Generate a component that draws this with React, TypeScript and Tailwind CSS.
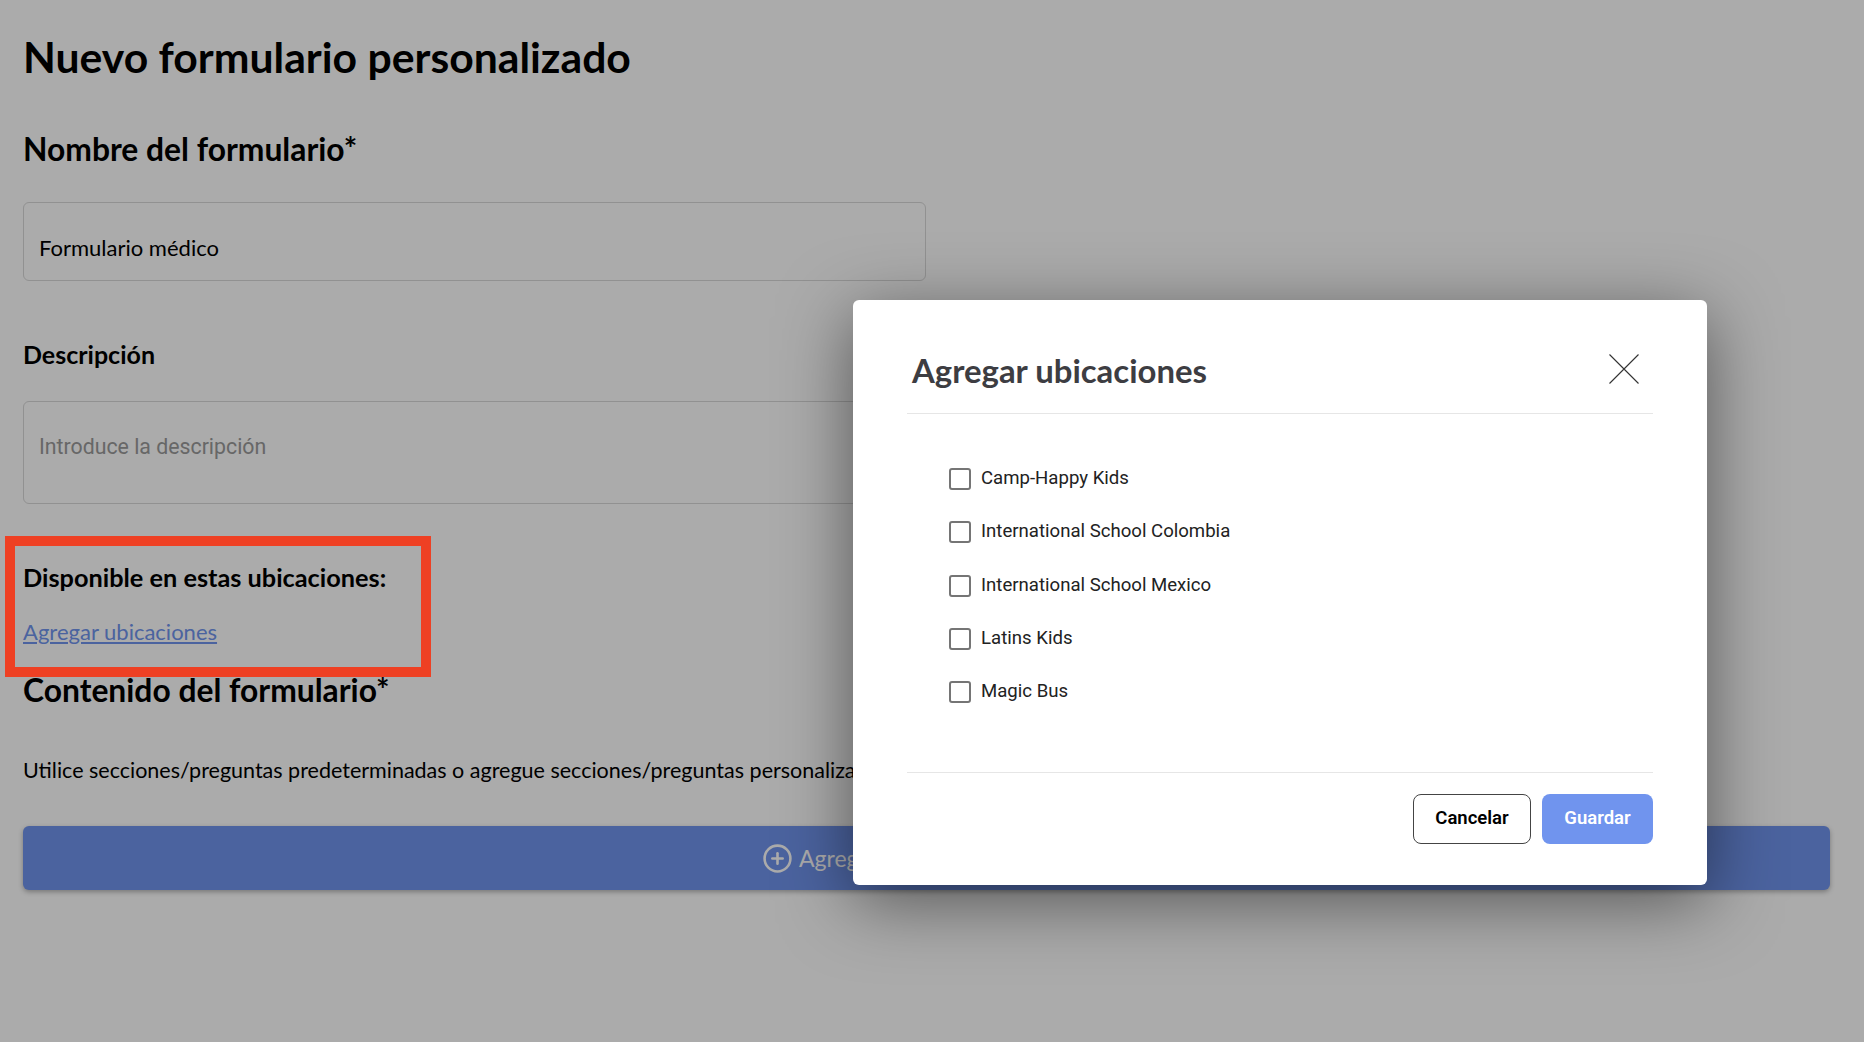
import { CirclePlus } from "lucide-react";

const LOCATIONS = [
  "Camp-Happy Kids",
  "International School Colombia",
  "International School Mexico",
  "Latins Kids",
  "Magic Bus",
];

function LocationsModal() {
  return (
    <div className="absolute left-[853px] top-[300px] w-[854px] h-[585px] bg-white rounded-md shadow-[0_16px_70px_rgba(0,0,0,0.5)] px-[54px] pt-[46px] font-['Roboto',sans-serif]">
      <div className="flex items-start justify-between h-[68px] border-b border-[#e6e6e6] pl-[5px] pr-[14px]">
        <h2 className="font-['Lato',sans-serif] font-bold text-[32.9px] leading-[49px] text-[#3d3d42]">Agregar ubicaciones</h2>
        <button className="mt-[8px] text-[#333]">
          <svg width="30" height="30" viewBox="0 0 30 30" fill="none" stroke="currentColor" strokeWidth="1.1">
            <path d="M0.5 0.5 29.5 29.5M29.5 0.5 0.5 29.5" />
          </svg>
        </button>
      </div>
      <div className="flex flex-col gap-[31.3px] pt-[54px] pl-[42px] h-[359px] border-b border-[#e6e6e6]">
        {LOCATIONS.map(name => (
          <label key={name} className="flex items-center gap-[10px] h-[22px] text-[18.6px] text-[#222]">
            <span className="w-[22px] h-[22px] border-2 border-[#757575] rounded-[3px] bg-white" />
            {name}
          </label>
        ))}
      </div>
      <div className="flex justify-end gap-[11px] pt-[21px]">
        <button className="w-[118px] h-[50px] rounded-lg border border-[#444] bg-white text-[18.5px] font-semibold text-black">Cancelar</button>
        <button className="w-[111px] h-[50px] rounded-lg bg-[#7094ee] text-[18.5px] font-semibold text-white">Guardar</button>
      </div>
    </div>
  );
}

export default function App() {
  return (
    <div className="relative h-[1042px] overflow-hidden bg-white font-['Lato',sans-serif] text-black">
      <div className="px-[23px] pt-[32px]">
        <h1 className="font-bold text-[42.7px] leading-[50px]">Nuevo formulario personalizado</h1>
        <h2 className="mt-[47px] font-bold text-[31.8px] leading-[40px]">Nombre del formulario*</h2>
        <div className="mt-[33px] w-[903px] h-[79px] border border-[#d8d8d8] rounded-md px-[15px] pt-[30px] text-[22px] leading-[30px]">Formulario médico</div>
        <h3 className="mt-[58px] font-bold text-[25px] leading-[30px]">Descripción</h3>
        <div className="mt-[32px] w-[903px] h-[103px] border border-[#d8d8d8] rounded-md px-[15px] pt-[30px] font-['Roboto',sans-serif] text-[21.3px] leading-[30px] text-[#9a9a9a]">Introduce la descripción</div>
        <h3 className="mt-[57px] font-bold text-[25.3px] leading-[32px]">Disponible en estas ubicaciones:</h3>
        <a className="block mt-[24px] text-[22px] leading-[30px] text-[#7094ee] underline">Agregar ubicaciones</a>
        <h2 className="mt-[23px] font-bold text-[31.8px] leading-[40px]">Contenido del formulario*</h2>
        <p className="mt-[45px] text-[21.5px] leading-[30px]">Utilice secciones/preguntas predeterminadas o agregue secciones/preguntas personalizadas.</p>
        <button className="mt-[41px] w-[1807px] h-[64px] rounded-md bg-[#7094ee] text-white text-[23px] flex items-center justify-center gap-[6px] shadow-[0_2px_5px_rgba(0,0,0,0.3)]">
          <CirclePlus size={31} strokeWidth={2} />
          Agregar secciones/preguntas
        </button>
      </div>

      <div className="absolute inset-0 bg-black/33" />
      <div className="absolute left-[5px] top-[536px] w-[426px] h-[141px] border-[10px] border-[#ee4023]" />
      <LocationsModal />
    </div>
  );
}
